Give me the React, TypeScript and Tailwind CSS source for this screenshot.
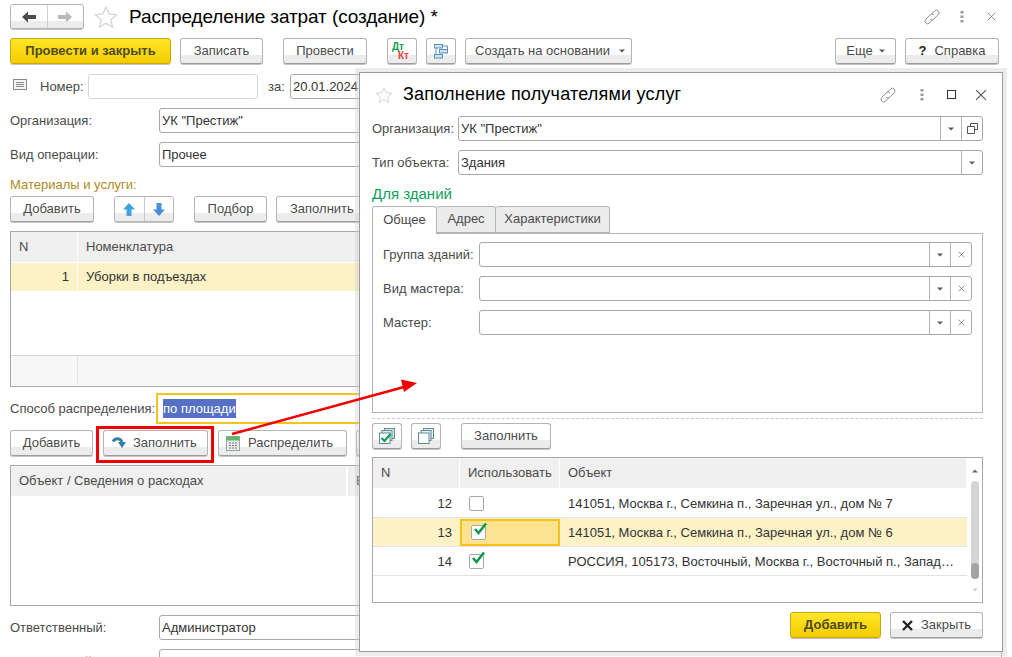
import type { ReactNode } from "react";

const btn =
  "flex h-[26px] shrink-0 items-center justify-center rounded-[3px] border border-[#b4b4b4] border-b-[#9c9c9c] bg-[linear-gradient(#ffffff_68%,#ececec_68%)] text-[13px] text-[#4a4a4a] shadow-[0_1px_0_#c4c4c4]";

const yellowBtn =
  "flex h-[26px] shrink-0 items-center justify-center rounded-[3px] border border-[#c9a800] bg-[linear-gradient(#ffe629,#f3cc00)] text-[13px] font-bold text-[#4f4a1e] shadow-[0_1px_0_#c4c4c4]";

function Star({ size = 24 }: { size?: number }) {
  return (
    <svg width={size} height={size} viewBox="0 0 24 24" fill="#fff" stroke="#d4d4d4" strokeWidth="1.3">
      <path d="M12 2l3 7 7.500 .7-5.700 5 1.700 7.500L12 18.300 5.500 22.200 7.200 14.700 1.500 9.700 9 9z" />
    </svg>
  );
}

function LinkIcon({ color = "#909090" }: { color?: string }) {
  return (
    <svg width="18" height="18" viewBox="0 0 18 18" fill="none" stroke={color} strokeWidth="1">
      <path d="M8 6.500l3.500-3.500a2.600 2.600 0 0 1 3.700 3.700l-4.500 4.500a2.600 2.600 0 0 1-3.700 0" />
      <path d="M10 11.500L6.500 15a2.600 2.600 0 0 1-3.700-3.700l4.500-4.500a2.600 2.600 0 0 1 3.700 0" />
    </svg>
  );
}

function Dots() {
  return (
    <svg width="4" height="14" viewBox="0 0 4 14" fill="#9a9a9a">
      <rect x="0.500" y="1" width="3" height="2.500" />
      <rect x="0.500" y="5.500" width="3" height="2.500" />
      <rect x="0.500" y="10" width="3" height="2.500" />
    </svg>
  );
}

function Cross({ size = 11, color = "#8c8c8c", width = 1 }: { size?: number; color?: string; width?: number }) {
  return (
    <svg width={size} height={size} viewBox="0 0 11 11" stroke={color} strokeWidth={width}>
      <path d="M1 1l9 9M10 1l-9 9" />
    </svg>
  );
}

function Caret({ color = "#5a5a5a" }: { color?: string }) {
  return (
    <svg width="6" height="4" viewBox="0 0 6 4" fill={color}>
      <path d="M0 .5h6L3 3.500z" />
    </svg>
  );
}

function NavArrow({ color, flip }: { color: string; flip?: boolean }) {
  return (
    <svg width="14" height="12" viewBox="0 0 14 12" fill={color} className={flip ? "-scale-x-100" : ""}>
      <path d="M0 6l6-5.500V4h8v4H6v3.500z" />
    </svg>
  );
}

function VArrow({ up }: { up?: boolean }) {
  return (
    <svg width="12" height="13" viewBox="0 0 12 13" className={up ? "" : "rotate-180"}>
      <path d="M6 0l6 6.500H8.500V13h-5V6.500H0z" fill={up ? "#3fa3e0" : "#4a8fd6"} />
    </svg>
  );
}

function CheckMark() {
  return (
    <svg width="15" height="14" viewBox="0 0 15 14" fill="none" className="absolute -top-[4px] left-[1px]">
      <path d="M2 7l3.500 4L13 1.500" stroke="#0d9a4e" strokeWidth="2.600" />
    </svg>
  );
}

function CheckBox({ checked }: { checked?: boolean }) {
  return (
    <span className="relative block h-[15px] w-[15px] rounded-[2px] border border-[#a8a8a8] bg-white">
      {checked && <CheckMark />}
    </span>
  );
}

function FieldBtn({ children }: { children: ReactNode }) {
  return <span className="flex w-[21px] items-center justify-center border-l border-[#b4b4b4]">{children}</span>;
}

function Field({ text, children, className = "" }: { text?: string; children?: ReactNode; className?: string }) {
  return (
    <div className={`flex h-[25px] min-w-0 flex-1 items-stretch rounded-[3px] border border-[#a8a8a8] bg-white text-[13px] text-[#333] ${className}`}>
      <span className="flex-1 truncate pl-[2px] leading-[23px]">{text}</span>
      {children}
    </div>
  );
}

function Labeled({ label, width, children, className = "" }: { label: string; width: string; children: ReactNode; className?: string }) {
  return (
    <div className={`flex shrink-0 items-center text-[13px] text-[#4a4a4a] ${className}`}>
      <span className={`shrink-0 ${width}`}>{label}</span>
      {children}
    </div>
  );
}

function HeadCell({ className, children }: { className: string; children?: ReactNode }) {
  return <div className={`flex h-[30px] items-center border-r border-white bg-[#f0f0f0] pl-[8px] text-[13px] text-[#4a4a4a] ${className}`}>{children}</div>;
}

const rows = [
  { n: 12, checked: false, text: "141051, Москва г., Семкина п., Заречная ул., дом № 7" },
  { n: 13, checked: true, text: "141051, Москва г., Семкина п., Заречная ул., дом № 6", active: true },
  { n: 14, checked: true, text: "РОССИЯ, 105173, Восточный, Москва г., Восточный п., Запад…" },
];

function Dialog() {
  return (
    <div className="absolute left-[359px] top-[72px] flex h-[580px] w-[644px] flex-col border border-[#9b9b9b] bg-white pl-[12px] pr-[19px] shadow-[0_0_0_4px_rgba(200,200,200,0.35)]">
      <div className="flex h-[43px] shrink-0 items-center">
        <span className="ml-[3px]">
          <Star size={18} />
        </span>
        <span className="ml-[10px] flex-1 text-[18px] tracking-[0.2px] text-black">Заполнение получателями услуг</span>
        <span className="mr-[23px]"><LinkIcon /></span>
        <span className="mr-[23px]"><Dots /></span>
        <span className="mr-[19px] block h-[9px] w-[9px] border border-[#333]" />
        <span className="mr-[-4px]"><Cross size={12} color="#555" /></span>
      </div>
      <Labeled label="Организация:" width="w-[86px]">
        <Field text={'УК "Престиж"'}>
          <FieldBtn><Caret /></FieldBtn>
          <FieldBtn>
            <svg width="11" height="11" viewBox="0 0 11 11" fill="none" stroke="#555">
              <path d="M3.500 3.500V.5h7v6h-3M.5 3.500h7v7h-7z" />
            </svg>
          </FieldBtn>
        </Field>
      </Labeled>
      <Labeled label="Тип объекта:" width="w-[86px]" className="mt-[9px]">
        <Field text="Здания">
          <FieldBtn><Caret /></FieldBtn>
        </Field>
      </Labeled>
      <div className="mt-[10px] h-[21px] shrink-0 text-[15px] leading-[17px] text-[#0aa05a]">Для зданий</div>
      <div className="flex h-[27px] shrink-0 text-[13px] text-[#4a4a4a]">
        <span className="z-10 flex h-[28px] w-[65px] items-center justify-center rounded-t-[3px] border border-b-0 border-[#b4b4b4] bg-white pb-[2px]">Общее</span>
        <span className="flex w-[59px] items-center justify-center rounded-t-[3px] border border-l-0 border-[#b4b4b4] bg-[#ececec] pb-[1px]">Адрес</span>
        <span className="flex w-[114px] items-center justify-center rounded-t-[3px] border border-l-0 border-[#b4b4b4] bg-[#ececec] pb-[1px]">Характеристики</span>
      </div>
      <div className="flex h-[180px] shrink-0 flex-col gap-[9px] border border-[#b4b4b4] pl-[10px] pr-[10px] pt-[8px]">
        {["Группа зданий:", "Вид мастера:", "Мастер:"].map((label) => (
          <Labeled key={label} label={label} width="w-[96px]">
            <Field>
              <FieldBtn><Caret /></FieldBtn>
              <FieldBtn><Cross size={7} color="#555" /></FieldBtn>
            </Field>
          </Labeled>
        ))}
      </div>
      <div className="mt-[5px] shrink-0 border-t border-dashed border-[#c8c8c8]" />
      <div className="mt-[4px] flex shrink-0">
        <div className={`${btn} w-[30px]`}>
          <svg width="18" height="18" viewBox="0 0 18 18" fill="#fff" stroke="#5f8a96">
            <rect x="6.500" y="1.500" width="10" height="10" fill="#dfe8ea" />
            <rect x="4" y="3.500" width="10" height="10" fill="#dfe8ea" />
            <rect x="1.500" y="6" width="10.500" height="10.500" />
            <path d="M3.500 11l3 3 6-7" fill="none" stroke="#0d9a4e" strokeWidth="2.200" />
          </svg>
        </div>
        <div className={`${btn} ml-[9px] w-[30px]`}>
          <svg width="18" height="18" viewBox="0 0 18 18" fill="#fff" stroke="#5f8a96">
            <rect x="6.500" y="1.500" width="10" height="10" fill="#e8eef0" />
            <rect x="4" y="3.500" width="10" height="10" fill="#e8eef0" />
            <rect x="1.500" y="6" width="10.500" height="10.500" />
          </svg>
        </div>
        <div className={`${btn} ml-[20px] w-[90px]`}>Заполнить</div>
      </div>
      <div className="mt-[8px] flex h-[146px] shrink-0 border border-[#a8a8a8]">
        <div className="min-w-0 flex-1">
          <div className="flex">
            <HeadCell className="w-[87px]">N</HeadCell>
            <HeadCell className="w-[100px]">Использовать</HeadCell>
            <HeadCell className="flex-1">Объект</HeadCell>
          </div>
          <div className="mt-[1px]">
            {rows.map((r) => (
              <div key={r.n} className={`flex h-[29px] items-center border-b border-b-[#e2e2e2] text-[13px] text-[#333] ${r.active ? "bg-[#fdf2c6]" : ""}`}>
                <span className="w-[87px] pr-[8px] pt-[1px] text-right">{r.n}</span>
                <span className={`flex h-[27px] w-[100px] items-center pl-[9px] ${r.active ? "border-2 border-[#f5c31b] bg-[#fde38f] pl-[7px]" : ""}`}>
                  <CheckBox checked={r.checked} />
                </span>
                <span className="ml-[8px] min-w-0 flex-1 truncate pt-[1px]">{r.text}</span>
              </div>
            ))}
          </div>
        </div>
        <div className="flex w-[15px] shrink-0 flex-col items-center pt-[11px]">
          <span className="rotate-180"><Caret color="#666" /></span>
          <div className="mt-[8px] flex h-[98px] w-[8px] flex-col justify-end rounded-[4px] bg-[#d4d4d4]">
            <div className="h-[16px] rounded-[4px] bg-[#a3a3a3]" />
          </div>
          <span className="mt-[9px] opacity-30"><Caret color="#666" /></span>
        </div>
      </div>
      <div className="mt-[9px] flex shrink-0 justify-end gap-[9px]">
        <div className={`${yellowBtn} w-[91px]`}>Добавить</div>
        <div className={`${btn} w-[93px] gap-[8px]`}>
          <Cross size={11} color="#222" width={2.400} />
          Закрыть
        </div>
      </div>
    </div>
  );
}

export default function App() {
  return (
    <div className="relative h-[657px] w-[1012px] overflow-hidden bg-white font-['Liberation_Sans',Arial,sans-serif]">
      {/* Документ */}
      <div className="flex flex-col px-[10px] pt-[4px]">
        <div className="flex h-[25px] shrink-0 items-center">
          <div className="flex h-[25px] w-[74px] rounded-[3px] border border-[#b4b4b4] bg-[linear-gradient(#ffffff_68%,#ececec_68%)] shadow-[0_1px_0_#c4c4c4]">
            <span className="flex flex-1 items-center justify-center border-r border-[#d0d0d0]"><NavArrow color="#4d4d4d" /></span>
            <span className="flex flex-1 items-center justify-center"><NavArrow color="#b8b8b8" flip /></span>
          </div>
          <span className="ml-[10px]"><Star size={24} /></span>
          <span className="ml-[11px] flex-1 pt-[1px] text-[19px] tracking-[-0.1px] text-black">Распределение затрат (создание) *</span>
          <span className="mr-[19px]"><LinkIcon /></span>
          <span className="mr-[23px]"><Dots /></span>
          <span className="mr-[6px]"><Cross size={9} color="#777" /></span>
        </div>
        <div className="mt-[9px] flex shrink-0">
          <div className={`${yellowBtn} w-[161px]`}>Провести и закрыть</div>
          <div className={`${btn} ml-[9px] w-[83px]`}>Записать</div>
          <div className={`${btn} ml-[20px] w-[84px]`}>Провести</div>
          <div className={`${btn} ml-[20px] w-[30px]`}>
            <span className="relative block h-[18px] w-[20px] text-[10px] font-bold leading-[9px]">
              <span className="absolute left-0 top-0 text-[#12a04e]">Дт</span>
              <span className="absolute left-[6px] top-[9px] text-[#ee3f3f]">Кт</span>
            </span>
          </div>
          <div className={`${btn} ml-[9px] w-[30px]`}>
            <svg width="16" height="16" viewBox="0 0 16 16" fill="#d4e4f2" stroke="#5b8fbd">
              <rect x="1.500" y="1.500" width="8" height="3.500" />
              <rect x="6.500" y="6.500" width="8" height="3.500" />
              <rect x="1.500" y="11.500" width="8" height="3.500" />
              <path d="M3 5v6.500M9.500 3h5M14.500 3v3" fill="none" />
            </svg>
          </div>
          <div className={`${btn} ml-[9px] w-[167px] gap-[9px] pl-[3px]`}>
            Создать на основании <Caret />
          </div>
          <div className="flex-1" />
          <div className={`${btn} w-[61px] gap-[6px]`}>
            Еще <Caret />
          </div>
          <div className={`${btn} ml-[9px] mr-[3px] w-[94px] gap-[8px]`}>
            <span className="font-bold text-[#222]">?</span> Справка
          </div>
        </div>
        <div className="mt-[10px] flex h-[25px] shrink-0 items-center text-[13px] text-[#4a4a4a]">
          <svg width="14" height="11" viewBox="0 0 14 11" fill="none" stroke="#8a8a8a" className="ml-[3px] -translate-y-[2px]">
            <rect x="0.500" y="0.500" width="13" height="10" fill="#f4f4f4" />
            <path d="M3 3.500h8M3 5.500h8M3 7.500h8" />
          </svg>
          <span className="ml-[13px] w-[48px]">Номер:</span>
          <div className="h-[25px] w-[170px] rounded-[3px] border border-[#d8d8d8]" />
          <span className="ml-[10px] w-[22px]">за:</span>
          <Field text="20.01.2024" />
        </div>
        <Labeled label="Организация:" width="w-[149px]" className="mt-[9px]">
          <Field text={'УК "Престиж"'} />
        </Labeled>
        <Labeled label="Вид операции:" width="w-[149px]" className="mt-[9px]">
          <Field text="Прочее" />
        </Labeled>
        <div className="mt-[9px] h-[20px] shrink-0 text-[13px] leading-[17px] text-[#b08a1e]">Материалы и услуги:</div>
        <div className="flex shrink-0">
          <div className={`${btn} w-[84px]`}>Добавить</div>
          <div className="ml-[20px] flex h-[26px] w-[60px] rounded-[3px] border border-[#b4b4b4] bg-[linear-gradient(#ffffff_68%,#ececec_68%)] shadow-[0_1px_0_#c4c4c4]">
            <span className="flex flex-1 items-center justify-center border-r border-[#c8c8c8]"><VArrow up /></span>
            <span className="flex flex-1 items-center justify-center"><VArrow /></span>
          </div>
          <div className={`${btn} ml-[20px] w-[73px]`}>Подбор</div>
          <div className={`${btn} ml-[9px] w-[100px] justify-start pl-[13px]`}>Заполнить</div>
        </div>
        <div className="mt-[9px] h-[156px] shrink-0 border border-[#a8a8a8]">
          <div className="flex">
            <HeadCell className="w-[67px]">N</HeadCell>
            <HeadCell className="flex-1">Номенклатура</HeadCell>
          </div>
          <div className="flex h-[29px] items-center border-t border-white bg-[#fdf2c6] text-[13px] text-[#333]">
            <span className="w-[67px] border-r border-white pr-[8px] text-right leading-[28px]">1</span>
            <span className="pl-[8px]">Уборки в подъездах</span>
          </div>
          <div className="mt-[64px] flex h-[30px] border-t border-[#d4d4d4] bg-[#f7f7f7]">
            <span className="w-[67px] border-r border-[#e2e2e2]" />
          </div>
        </div>
        <div className="mt-[6px] flex h-[31px] shrink-0 items-center text-[13px] text-[#4a4a4a]">
          <span className="w-[146px] shrink-0">Способ распределения:</span>
          <div className="flex h-[31px] flex-1 items-center border-2 border-[#f5c31b] pl-[5px]">
            <span className="bg-[#5570c4] text-white">по площади</span>
          </div>
        </div>
        <div className="mt-[6px] flex shrink-0">
          <div className={`${btn} w-[83px]`}>Добавить</div>
          <div className={`${btn} ml-[10px] w-[105px] justify-start gap-[6px] pl-[8px]`}>
            <svg width="15" height="14" viewBox="0 0 15 14" fill="none">
              <path d="M1 5.500C3 2 8 1.500 10 6" stroke="#2f7fa8" strokeWidth="2.800" />
              <path d="M6 6h8l-4 6z" fill="#2f7fa8" />
            </svg>
            Заполнить
          </div>
          <div className={`${btn} ml-[10px] w-[129px] justify-start gap-[8px] pl-[7px]`}>
            <svg width="14" height="15" viewBox="0 0 14 15">
              <rect x="0.500" y="0.500" width="13" height="14" fill="#e8ecec" stroke="#9aa4a4" />
              <rect x="0.500" y="0.500" width="13" height="4" fill="#5fb86a" />
              <path d="M3 7h2M6 7h2M9 7h2M3 9.500h2M6 9.500h2M9 9.500h2M3 12h2M6 12h2M9 12h2" stroke="#777" />
            </svg>
            Распределить
          </div>
          <div className={`${btn} ml-[9px] w-[60px]`} />
        </div>
        <div className="mt-[9px] h-[141px] shrink-0 border border-[#a8a8a8]">
          <div className="flex">
            <HeadCell className="w-[336px]">Объект / Сведения о расходах</HeadCell>
            <HeadCell className="flex-1 border-l border-[#d8d8d8]">В</HeadCell>
          </div>
        </div>
        <Labeled label="Ответственный:" width="w-[149px]" className="mt-[9px]">
          <Field text="Администратор" />
        </Labeled>
        <Labeled label="Комментарий:" width="w-[149px]" className="mt-[9px]">
          <Field />
        </Labeled>
      </div>

      <Dialog />

      {/* Пометки поверх окна */}
      <div className="absolute left-[96px] top-[426px] h-[37px] w-[118px] border-[3px] border-[#f00000]" />
      <svg className="pointer-events-none absolute left-0 top-0" width="1012" height="657" fill="#f00000">
        <path d="M232 434L404 387" stroke="#f00000" strokeWidth="2.500" />
        <path d="M417 383L401 379.500 404 392z" />
      </svg>
    </div>
  );
}
